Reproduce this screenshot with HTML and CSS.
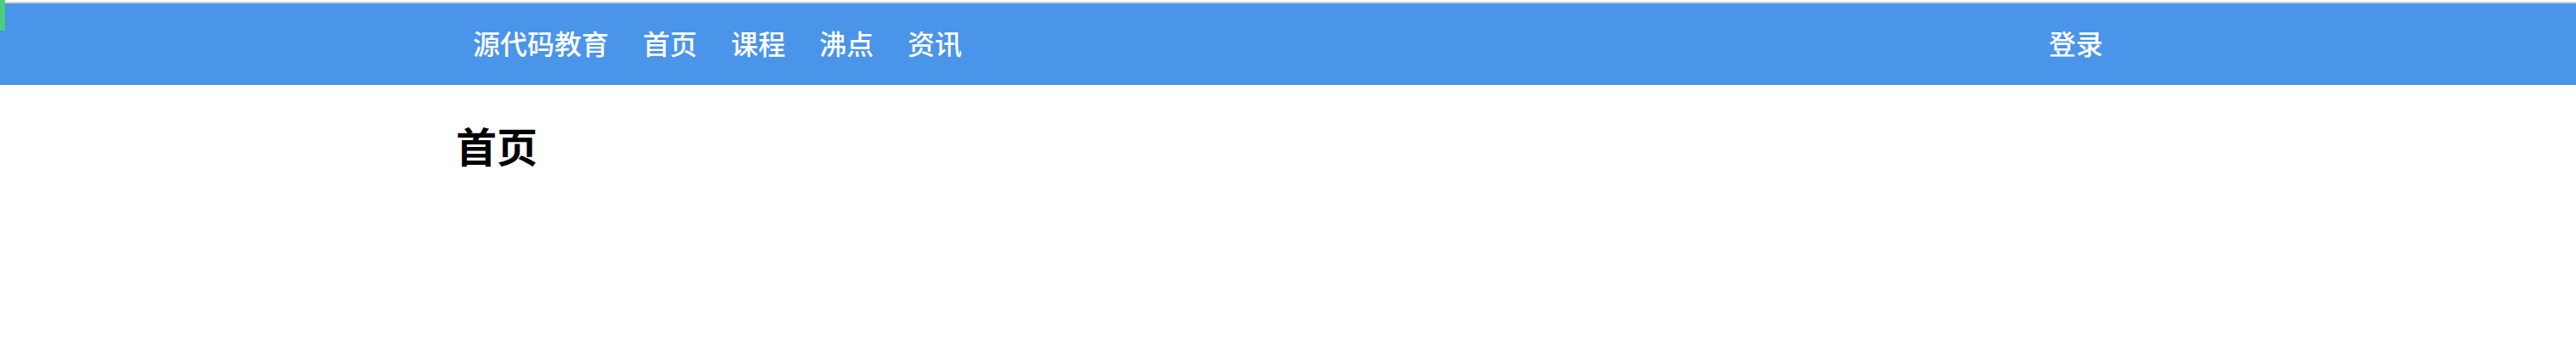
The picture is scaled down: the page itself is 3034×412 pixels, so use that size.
FILE: index.html
```html
<!DOCTYPE html>
<html lang="zh-CN">
<head>
<meta charset="utf-8">
<title>首页</title>
<link rel="stylesheet" href="styles.css">
</head>
<body>
<span class="marker"></span>
<header class="navbar">
  <nav class="container bar">
    <a class="link" href="#">源代码教育</a>
    <a class="link" href="#">首页</a>
    <a class="link" href="#">课程</a>
    <a class="link" href="#">沸点</a>
    <a class="link" href="#">资讯</a>
    <a class="link login" href="#">登录</a>
  </nav>
</header>
<main class="container">
  <h1 class="title">首页</h1>
</main>
</body>
</html>
```

FILE: styles.css
```css
* { box-sizing: border-box; }
body {
  margin: 0;
  padding-top: 2px;
  background: #fff;
  color: #000;
  font-family: "Noto Sans CJK SC", sans-serif;
}
.marker {
  position: absolute;
  top: 0;
  left: 0;
  width: 6px;
  height: 36px;
  background: #4bcf7c;
}
.navbar {
  background: #4a94ea;
  border-top: 2px solid #d3d3d6;
}
.container {
  max-width: 1960px;
  margin: 0 auto;
}
.bar {
  display: flex;
  padding: 22px 0 26px;
  align-items: center;
}
.link {
  padding: 0 20px;
  font-size: 32px;
  line-height: 48px;
  font-weight: 500;
  color: #fff;
  text-decoration: none;
}
.login { margin-left: auto; }
.title {
  margin: 34px 0;
  font-size: 48px;
  line-height: 72px;
  font-weight: 700;
}
```
